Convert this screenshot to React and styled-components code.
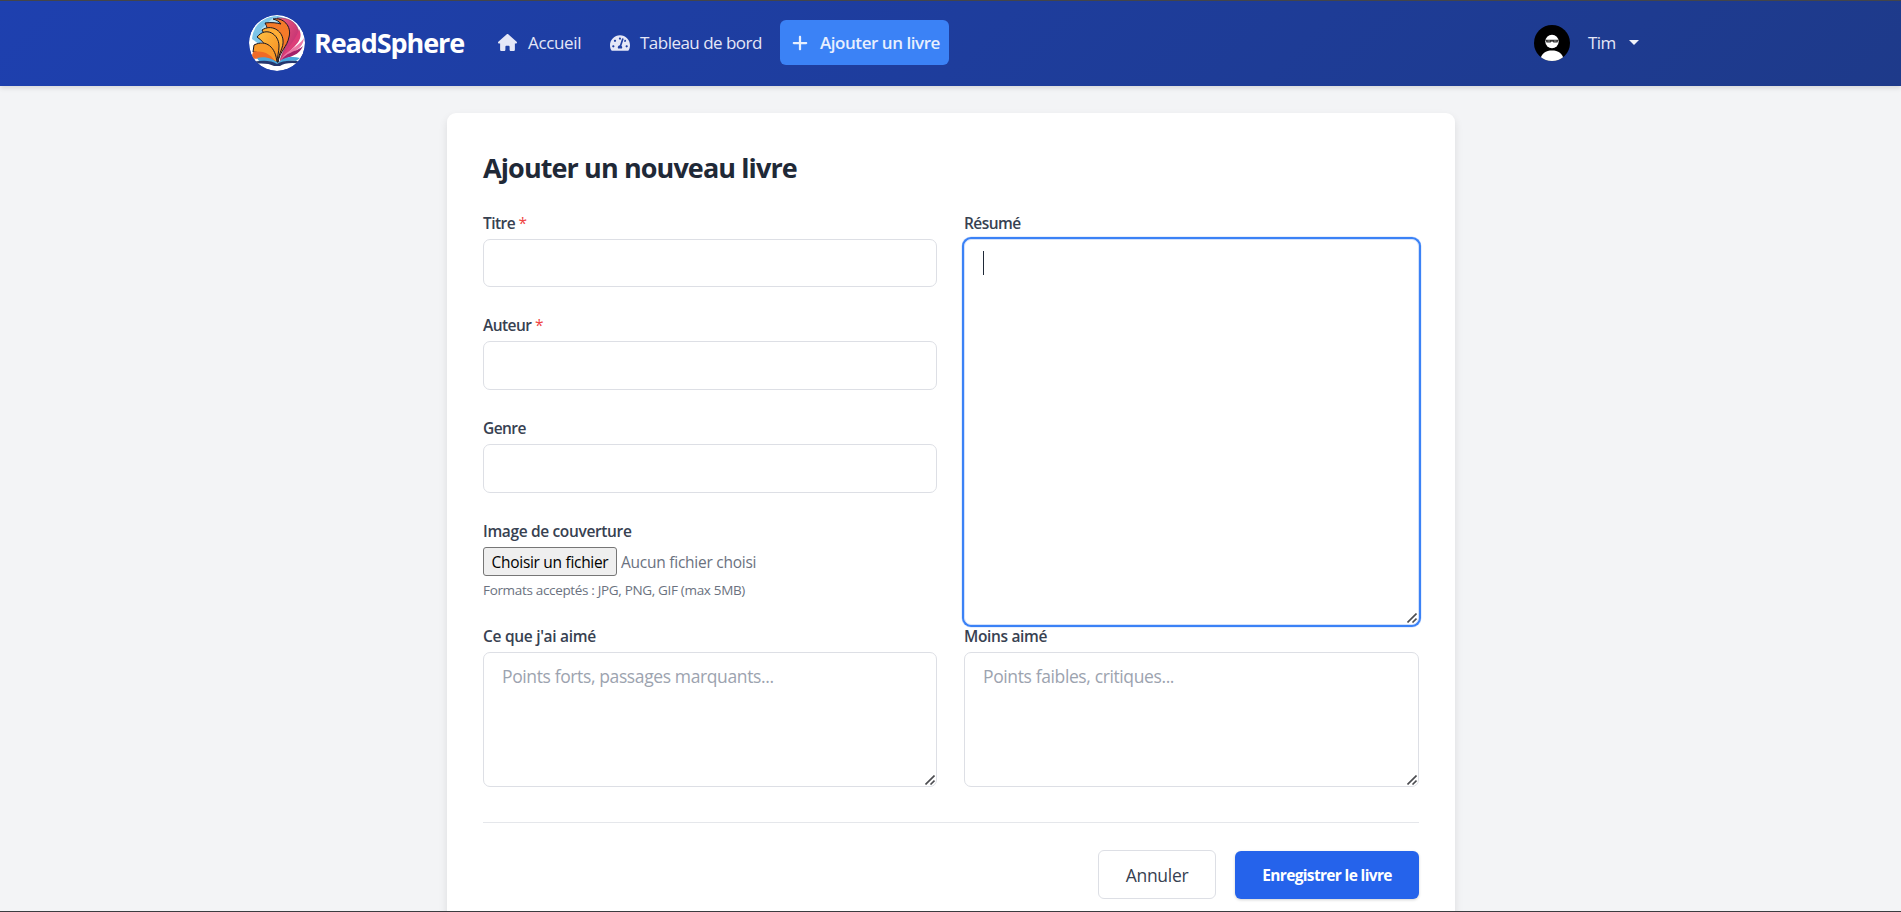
import React from "react";
import styled, { createGlobalStyle, css } from "styled-components";
import { FaTachometerAlt } from "react-icons/fa";
import { FaHouse, FaPlus } from "react-icons/fa6";

const GlobalStyle = createGlobalStyle`
  *, *::before, *::after { box-sizing: border-box; }
  html, body { margin: 0; height: 100%; overflow: hidden; }
  body {
    background: #f3f4f6;
    font-family: "Open Sans", "Noto Sans", sans-serif;
    font-size: 18px;
    color: #1f2937;
  }
`;

const Page = styled.div`
  height: 912px;
  overflow: hidden;
  border-top: 1px solid #444549;
  border-bottom: 1px solid #3b3c40;
`;

const Navbar = styled.header`
  height: 85px;
  background: linear-gradient(135deg, #1e40af, #1e3a8a);
  box-shadow: 0 2px 5px rgba(0, 0, 0, 0.12);
`;

const NavInner = styled.div`
  display: flex;
  align-items: center;
  justify-content: space-between;
  height: 83px;
  padding: 0 262px 0 249px;
`;

const NavGroup = styled.nav`
  display: flex;
  align-items: center;
  height: 45px;
`;

const Brand = styled.a`
  display: flex;
  align-items: center;
  gap: 9px;
  width: 249px;
  height: 57px;
  color: #fff;
  font-size: 27px;
  font-weight: 700;
  letter-spacing: -1.1px;
  white-space: nowrap;

  svg { flex: none; margin-top: 1px; }
`;

const NavLink = styled.a`
  display: flex;
  align-items: center;
  flex: none;
  gap: ${(p) => p.$gap || 11}px;
  width: ${(p) => p.$width}px;
  height: 45px;
  padding-left: ${(p) => p.$pad || 0}px;
  color: #e5e7f7;
  font-size: 17px;
  letter-spacing: ${(p) => p.$track || 0}px;
  white-space: nowrap;

  svg { flex: none; }

  ${(p) =>
    p.$active &&
    css`
      background: #3b82f6;
      border-radius: 6px;
      font-weight: 600;
      color: #e8effe;
    `}
`;

const UserMenu = styled.div`
  display: flex;
  align-items: center;
  color: #e5e7f7;
  font-size: 17px;
`;

const UserName = styled.span`
  width: 41px;
  margin-left: 18px;
  letter-spacing: -0.6px;
`;

const Caret = styled.span`
  width: 10px;
  border: 5px solid transparent;
  border-top-color: #f1f3fa;
  border-bottom: 0;
`;

const Card = styled.main`
  width: 1008px;
  height: 900px;
  margin: 27px 0 0 447px;
  padding: 37px 36px 36px;
  background: #fff;
  border-radius: 9px;
  box-shadow: 0 4px 8px rgba(0, 0, 0, 0.1);
`;

const Title = styled.h1`
  margin: 0 0 26px;
  font-size: 27px;
  line-height: 36px;
  font-weight: 700;
  letter-spacing: -0.9px;
`;

const Columns = styled.div`
  display: grid;
  grid-template-columns: 454px 455px;
  column-gap: 27px;
`;

const Field = styled.div`
  display: flex;
  flex-direction: column;
  height: ${(p) => p.$height}px;
`;

const Label = styled.label`
  height: 27px;
  color: #374151;
  font-size: 15.5px;
  line-height: 23px;
  font-weight: 600;
  letter-spacing: ${(p) => p.$track || -0.55}px;
  white-space: nowrap;
`;

const Required = styled.span`
  color: #ef4444;
  font-weight: 400;
`;

const control = css`
  display: block;
  width: 100%;
  margin: 0;
  border: 1px solid #dddfe5;
  border-radius: 7px;
  background: #fff;
  outline: none;
  font: inherit;
  color: #1f2937;
`;

const Input = styled.input`
  ${control}
  height: ${(p) => p.$height}px;
  padding: 0 18px;
`;

const TextArea = styled.textarea`
  ${control}
  height: ${(p) => p.$height}px;
  padding: 11px 18px;
  line-height: 25px;
  font-size: 17.5px;
  letter-spacing: -0.38px;
  resize: none;

  &::placeholder { color: #9ca3af; opacity: 1; }

  ${(p) =>
    p.$focused &&
    css`
      border-color: #d3e1fb;
      box-shadow: 0 0 0 2px #3b82f6, 0 0 0 2.5px #cfdffc;
    `}
`;

const AreaWrap = styled.div`
  position: relative;
`;

const Grip = styled.svg`
  position: absolute;
  right: 2px;
  bottom: 2px;
  width: 10px;
  height: 10px;
`;

const TextCursor = styled.span`
  position: absolute;
  top: 12px;
  left: 19px;
  width: 1px;
  height: 24px;
  background: #1f2937;
`;

const FilePicker = styled.div`
  display: flex;
  align-items: center;
  gap: 4px;
  height: 29px;
  color: #6b7280;
  font-size: 15.5px;
  letter-spacing: -0.25px;
  white-space: nowrap;
`;

const FileButton = styled.button`
  width: 134px;
  height: 29px;
  padding: 0;
  border: 1px solid #767676;
  border-radius: 3px;
  background: #efefef;
  color: #000;
  font: inherit;
  letter-spacing: -0.3px;
`;

const Hint = styled.p`
  margin: 4px 0 0;
  color: #6b7280;
  font-size: 13.5px;
  line-height: 21px;
  letter-spacing: -0.33px;
`;

const Actions = styled.div`
  display: flex;
  justify-content: flex-end;
  align-items: center;
  gap: 19px;
  margin-top: 35px;
  padding-top: 27px;
  border-top: 1px solid #e5e7eb;
`;

const Button = styled.button`
  width: ${(p) => (p.$primary ? 184 : 118)}px;
  height: ${(p) => (p.$primary ? 48 : 49)}px;
  padding: 0;
  border: ${(p) => (p.$primary ? "0" : "1px solid #dddfe5")};
  border-radius: 6px;
  background: ${(p) => (p.$primary ? "#2563eb" : "#fff")};
  color: ${(p) => (p.$primary ? "#fff" : "#374151")};
  box-shadow: ${(p) => (p.$primary ? "0 1px 3px rgba(0, 0, 0, 0.18)" : "none")};
  font-family: inherit;
  font-size: ${(p) => (p.$primary ? 15.5 : 17.5)}px;
  font-weight: ${(p) => (p.$primary ? 700 : 400)};
  letter-spacing: ${(p) => (p.$primary ? -0.65 : -0.3)}px;
`;

const Logo = () => (
  <svg width="56" height="56" viewBox="0 0 56 56">
    <defs>
      <clipPath id="logoClip"><circle cx="28" cy="28" r="28" /></clipPath>
      <linearGradient id="gold" x1="0" y1="0" x2="1" y2="1">
        <stop offset="0" stopColor="#ffc043" /><stop offset="1" stopColor="#f58a1f" />
      </linearGradient>
      <linearGradient id="rose" x1="0" y1="0" x2="1" y2="1">
        <stop offset="0" stopColor="#f0627e" /><stop offset="1" stopColor="#b31f70" />
      </linearGradient>
    </defs>
    <g clipPath="url(#logoClip)">
      <circle cx="28" cy="28" r="28" fill="#fff" />
      <path d="M3 24C4 10 15 1 29 1L38 4 27 15 10 29Z" fill="#7cc5e8" />
      <path d="M12 14 24 3 30 5 18 18Z" fill="#b9e2f3" />
      <path d="M28 3C40 2 49 8 50 18C51 30 36 36 31 47C32 35 44 25 38 14C36 9 33 6 28 3Z" fill="url(#rose)" stroke="#7d1f55" strokeWidth="0.5" />
      <path d="M50 14C57 28 39 34 31 48C32 37 46 29 50 14Z" fill="#dc3d78" />
      <path d="M55 23C53 38 38 37 31 48C34 36 48 34 55 23Z" fill="#ec77a5" />
      <path d="M54 31C49 43 38 40 31 48C35 37 48 37 54 31Z" fill="#a3216a" />
      <g stroke="#1a1723" strokeWidth="1">
        <path d="M24 4C34 2 43 11 40 22C38 32 31 36 29 47C22 35 26 26 20 18C18 14 18 11 16 8C23 7 28 8 32 9C30 6 27 5 24 4Z" fill="#f47a29" />
        <path d="M13 15C22 9 33 15 34 25C35 33 29 38 29 48C20 36 20 27 13 15Z" fill="#ffad35" />
        <path d="M8 22C17 11 30 19 30 31C30 38 28 42 28 48C21 38 17 28 8 22Z" fill="url(#gold)" />
        <path d="M5 30C17 24 27 32 28 48C20 42 12 37 4 37Z" fill="#f99a2a" />
      </g>
      <path d="M4 37C15 35 23 40 27 48C19 44 12 43 2 44Z" fill="#ee6a28" />
      <path d="M8 43C17 41 24 44 29 48C34 42 43 41 51 43L47 46C39 45 34 47 29 50C22 46 17 46 10 46Z" fill="#4aa7dc" />
      <path d="M2 47C14 45 22 45 28 49C34 45 43 45 54 47L53 49C43 47 35 48 31 51H25C20 48 12 48 2 49Z" fill="#25366d" />
    </g>
  </svg>
);

const Avatar = () => (
  <svg width="36" height="36" viewBox="0 0 36 36">
    <defs><clipPath id="avatarClip"><circle cx="18" cy="18" r="18" /></clipPath></defs>
    <g clipPath="url(#avatarClip)">
      <rect width="36" height="36" fill="#000" />
      <circle cx="18" cy="16.5" r="6.7" fill="#fff" />
      <path d="M6 36C7 28 12 25.5 18 25.5S29 28 30 36Z" fill="#fff" />
      <path d="M11.5 14.8H24.5L23.5 17.4H19.5L18 16.2L16.5 17.4H12.5Z" fill="#333" />
      <path d="M13.5 16H16M20 16H22.5" stroke="#aaa" strokeWidth="0.8" />
    </g>
  </svg>
);

const ResizeGrip = () => (
  <Grip viewBox="0 0 10 10">
    <path d="M0.5 9.5 9.5 0.5M5.5 9.5 9.5 5.5" stroke="#4b4c50" strokeWidth="1.6" />
  </Grip>
);

export default function App() {
  return (
    <Page>
      <GlobalStyle />
      <Navbar>
        <NavInner>
          <NavGroup>
            <Brand><Logo />ReadSphere</Brand>
            <NavLink $width={112} $track={-0.35}><FaHouse size={19} />Accueil</NavLink>
            <NavLink $width={170} $gap={10} $track={-0.52}><FaTachometerAlt size={20} />Tableau de bord</NavLink>
            <NavLink $active $width={169} $pad={11} $track={-0.45}><FaPlus size={18} />Ajouter un livre</NavLink>
          </NavGroup>
          <UserMenu><Avatar /><UserName>Tim</UserName><Caret /></UserMenu>
        </NavInner>
      </Navbar>
      <Card>
        <Title>Ajouter un nouveau livre</Title>
        <Columns>
          <div>
            <Field $height={102}>
              <Label>Titre <Required>*</Required></Label>
              <Input $height={48} />
            </Field>
            <Field $height={103}>
              <Label>Auteur <Required>*</Required></Label>
              <Input $height={49} />
            </Field>
            <Field $height={103}>
              <Label>Genre</Label>
              <Input $height={49} />
            </Field>
            <Field $height={105}>
              <Label $track={-0.35}>Image de couverture</Label>
              <FilePicker><FileButton>Choisir un fichier</FileButton>Aucun fichier choisi</FilePicker>
              <Hint>Formats acceptés : JPG, PNG, GIF (max 5MB)</Hint>
            </Field>
          </div>
          <Field $height={413}>
            <Label>Résumé</Label>
            <AreaWrap>
              <TextArea $height={386} $focused />
              <TextCursor />
              <ResizeGrip />
            </AreaWrap>
          </Field>
          <Field $height={162}>
            <Label $track={-0.3}>Ce que j'ai aimé</Label>
            <AreaWrap>
              <TextArea $height={135} placeholder="Points forts, passages marquants..." />
              <ResizeGrip />
            </AreaWrap>
          </Field>
          <Field $height={162}>
            <Label $track={-0.35}>Moins aimé</Label>
            <AreaWrap>
              <TextArea $height={135} placeholder="Points faibles, critiques..." />
              <ResizeGrip />
            </AreaWrap>
          </Field>
        </Columns>
        <Actions>
          <Button>Annuler</Button>
          <Button $primary>Enregistrer le livre</Button>
        </Actions>
      </Card>
    </Page>
  );
}
